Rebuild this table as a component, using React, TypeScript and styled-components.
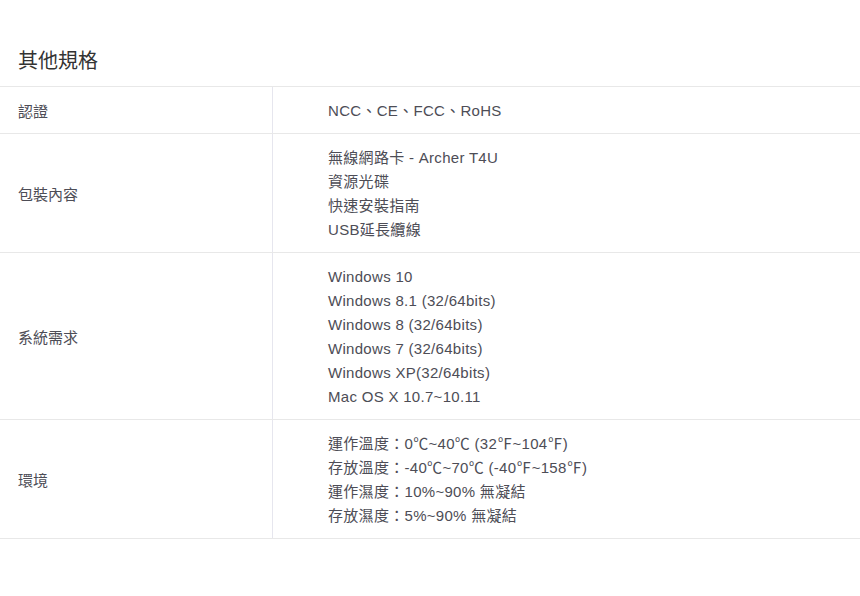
import { createGlobalStyle, styled } from "styled-components";

const GlobalStyle = createGlobalStyle`
  html, body {
    margin: 0;
    padding: 0;
    background: #fff;
  }
  body {
    font-family: "Liberation Sans", Arial, "Noto Sans CJK TC", sans-serif;
    color: #4d4d56;
  }
`;

const specs: { label: string; values: string[] }[] = [
  { label: "認證", values: ["NCC、CE、FCC、RoHS"] },
  {
    label: "包裝內容",
    values: ["無線網路卡 - Archer T4U", "資源光碟", "快速安裝指南", "USB延長纜線"],
  },
  {
    label: "系統需求",
    values: [
      "Windows 10",
      "Windows 8.1 (32/64bits)",
      "Windows 8 (32/64bits)",
      "Windows 7 (32/64bits)",
      "Windows XP(32/64bits)",
      "Mac OS X 10.7~10.11",
    ],
  },
  {
    label: "環境",
    values: [
      "運作溫度：0℃~40℃ (32℉~104℉)",
      "存放溫度：-40℃~70℃ (-40℉~158℉)",
      "運作濕度：10%~90% 無凝結",
      "存放濕度：5%~90% 無凝結",
    ],
  },
];

export default function App() {
  return (
    <>
      <GlobalStyle />
      <Section>
        <Title>其他規格</Title>
        <Table>
          {specs.map((row) => (
            <Row key={row.label}>
              <Label>{row.label}</Label>
              <Values>
                {row.values.map((v) => (
                  <Line key={v}>{v}</Line>
                ))}
              </Values>
            </Row>
          ))}
        </Table>
      </Section>
    </>
  );
}

const Section = styled.section`
  padding-top: 47px;
`;

const Title = styled.h2`
  margin: 0;
  padding: 0 18px;
  height: 39px;
  font-size: 20px;
  font-weight: normal;
  line-height: 28px;
  color: #333;
`;

const Table = styled.div`
  border-top: 1px solid #e8e8e8;
`;

const Row = styled.div`
  display: grid;
  grid-template-columns: 273px 1fr;
  border-bottom: 1px solid #e8e8e8;
`;

const Label = styled.div`
  display: flex;
  align-items: center;
  padding: 1px 18px 0;
  font-size: 15px;
  border-right: 1px solid #e6e6ee;
`;

const Values = styled.div`
  padding: 12px 0 10px 55px;
  font-size: 15px;
  line-height: 24px;
  letter-spacing: 0.3px;
`;

const Line = styled.div``;
